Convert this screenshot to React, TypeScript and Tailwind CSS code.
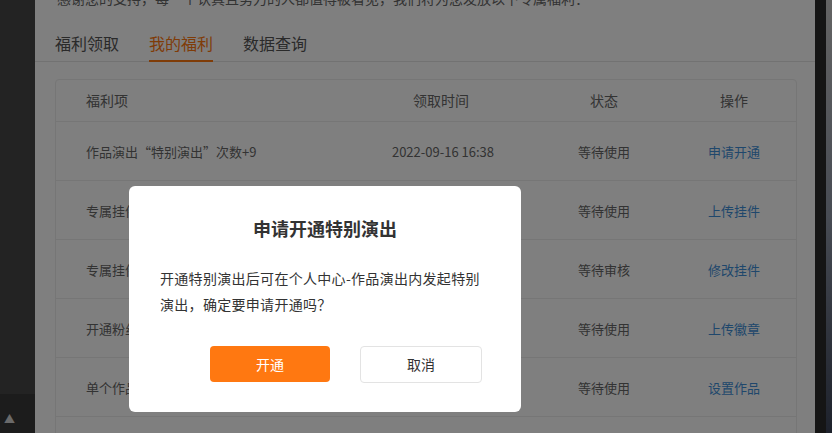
import React from 'react';

const rows = [
  { name: '作品演出“特别演出”次数+9', time: '2022-09-16 16:38', status: '等待使用', action: '申请开通' },
  { name: '专属挂件（限时7天）', time: '2022-09-16 16:38', status: '等待使用', action: '上传挂件' },
  { name: '专属挂件（限时30天）', time: '2022-09-12 10:21', status: '等待审核', action: '修改挂件' },
  { name: '开通粉丝徽章', time: '2022-09-08 19:05', status: '等待使用', action: '上传徽章' },
  { name: '单个作品首页推荐位', time: '2022-09-01 09:47', status: '等待使用', action: '设置作品' },
  { name: '', time: '', status: '', action: '' },
];

const font = { fontFamily: '"Noto Sans CJK SC", "Noto Sans", sans-serif' };

function App() {
  return (
    <div className="relative w-[832px] h-[433px] overflow-hidden flex bg-[#444]" style={font}>
      {/* left sidebar strip */}
      <div className="w-[35px] flex flex-col shrink-0">
        <div className="flex-1 bg-[#464646]" />
        <div className="h-[39px] bg-[#383838] flex items-center pl-[4px] pt-[10px] text-[11px] text-[#d4d4d4]">▲</div>
      </div>

      {/* main panel */}
      <div className="w-[780px] shrink-0 bg-white pl-[20px] pr-[18px]">
        <p className="-mt-[12px] h-[20px] leading-[20px] text-[14px] text-[#666] pl-[2px] whitespace-nowrap">
          感谢您的支持，每一个认真且努力的人都值得被看见，我们将为您发放以下专属福利：
        </p>

        {/* tabs */}
        <div className="flex gap-[30px] border-b border-[#e4e4e4] -mx-[20px] px-[20px] -mr-[18px]">
          <div className="-mb-[1px] pt-[23px] pb-[5px] border-b-2 border-transparent text-[16px] leading-[24px] text-[#555]">福利领取</div>
          <div className="-mb-[1px] pt-[23px] pb-[5px] border-b-2 border-[#ff7811] text-[16px] leading-[24px] text-[#ff7811]">我的福利</div>
          <div className="-mb-[1px] pt-[23px] pb-[5px] border-b-2 border-transparent text-[16px] leading-[24px] text-[#555]">数据查询</div>
        </div>

        {/* table */}
        <div className="mt-[17px] border border-[#ececec] rounded-[4px]">
          <div className="grid grid-cols-[290px_190px_136px_124px] h-[42px] items-center border-b border-[#ececec] text-[14px] text-[#666]">
            <div className="pl-[30px]">福利项</div>
            <div className="text-center">领取时间</div>
            <div className="text-center">状态</div>
            <div className="text-center">操作</div>
          </div>
          {rows.map((r, i) => (
            <div key={i} className="grid grid-cols-[290px_190px_136px_124px] h-[59px] pt-[2px] items-center border-b border-[#ececec] text-[13px] text-[#666]">
              <div className="pl-[30px] whitespace-nowrap">{r.name}</div>
              <div className="text-center pl-[4px]">{r.time}</div>
              <div className="text-center">{r.status}</div>
              <div className="text-center text-[#3f8fd8]">{r.action}</div>
            </div>
          ))}
        </div>
      </div>

      {/* right edge */}
      <div className="w-[11px] shrink-0 bg-[#2a2a2a]" />
      <div className="w-[6px] shrink-0 bg-gradient-to-b from-[#c8c8c8] via-[#9098a8] to-[#3c4458]" />

      {/* mask */}
      <div className="absolute inset-0 bg-black/50" />

      {/* dialog */}
      <div className="absolute left-[129px] top-[186px] w-[392px] h-[226px] bg-white rounded-[6px]">
        <h2 className="pt-[30px] text-center text-[18px] leading-[24px] font-bold text-[#333]">申请开通特别演出</h2>
        <p className="mt-[25px] ml-[31px] w-[324px] text-[14px] leading-[26px] tracking-[0.3px] text-[#333]">
          开通特别演出后可在个人中心-作品演出内发起特别演出，确定要申请开通吗？
        </p>
        <div className="mt-[29px] ml-[81px] flex gap-[30px]">
          <button className="w-[120px] h-[36px] rounded-[4px] bg-[#ff7811] text-white text-[14px]">开通</button>
          <button className="w-[122px] h-[37px] rounded-[4px] border border-[#e3e3e3] bg-white text-[#333] text-[14px]">取消</button>
        </div>
      </div>
    </div>
  );
}

export default App;
